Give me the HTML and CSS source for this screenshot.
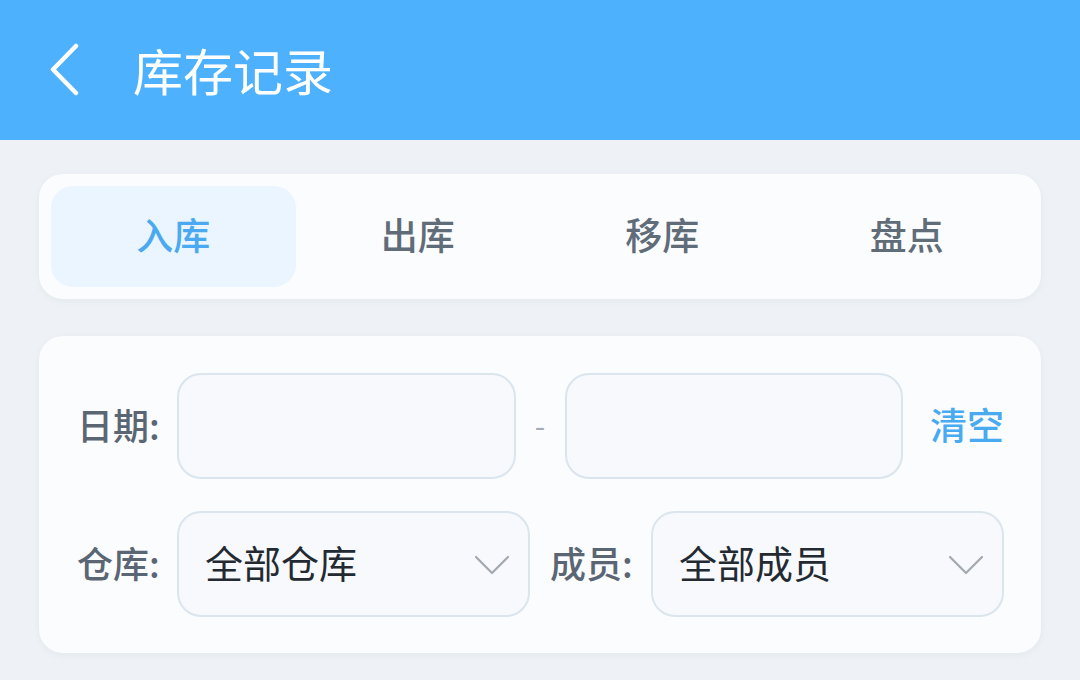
FILE: index.html
```html
<!DOCTYPE html>
<html lang="zh-CN">
<head>
<meta charset="utf-8">
<title>库存记录</title>
<link rel="stylesheet" href="styles.css">
</head>
<body>
<header class="topbar">
  <svg class="back" width="34" height="56" viewBox="0 0 34 56">
    <polyline points="27,3 4,26.5 27,50" fill="none" stroke="#ffffff" stroke-width="4.5" stroke-linecap="round" stroke-linejoin="round"/>
  </svg>
  <h1 class="title">库存记录</h1>
</header>
<main class="content">
  <section class="card tabs">
    <div class="tab active">入库</div>
    <div class="tab">出库</div>
    <div class="tab">移库</div>
    <div class="tab">盘点</div>
  </section>
  <section class="card filters">
    <div class="row">
      <span class="label">日期:</span>
      <div class="field"></div>
      <span class="dash">-</span>
      <div class="field"></div>
      <span class="clear">清空</span>
    </div>
    <div class="row">
      <span class="label">仓库:</span>
      <div class="field select"><span class="value">全部仓库</span>
        <svg class="chev" width="36" height="22" viewBox="0 0 36 22"><polyline points="2,3 18,19 34,3" fill="none" stroke="#a3a9b0" stroke-width="2.2" stroke-linecap="round" stroke-linejoin="round"/></svg>
      </div>
      <span class="label label2">成员:</span>
      <div class="field select"><span class="value">全部成员</span>
        <svg class="chev" width="36" height="22" viewBox="0 0 36 22"><polyline points="2,3 18,19 34,3" fill="none" stroke="#a3a9b0" stroke-width="2.2" stroke-linecap="round" stroke-linejoin="round"/></svg>
      </div>
    </div>
  </section>
</main>
</body>
</html>
```
FILE: styles.css
```css
* { box-sizing: border-box; }
html, body { margin: 0; padding: 0; }
body {
  width: 1080px;
  height: 680px;
  overflow: hidden;
  background: #eef2f6;
  font-family: "Noto Sans CJK SC", "Noto Sans", sans-serif;
}
.topbar {
  height: 140px;
  background: #4db1fd;
  display: flex;
  align-items: center;
  padding-left: 49px;
}
.back { display: block; margin-top: 2px; }
.title {
  margin: 0 0 0 50px;
  font-size: 50px;
  font-weight: 400;
  color: #ffffff;
  line-height: 1;
  padding-bottom: 2px;
}
.content {
  padding: 34px 39px 0 39px;
  display: flex;
  flex-direction: column;
  gap: 37px;
}
.card {
  background: #fbfcfe;
  border-radius: 24px;
  box-shadow: 0 2px 6px rgba(150, 165, 185, 0.12);
}
.tabs {
  height: 125px;
  padding: 12px;
  display: grid;
  grid-template-columns: repeat(4, 1fr);
}
.tab {
  display: flex;
  align-items: center;
  justify-content: center;
  padding-bottom: 5px;
  font-size: 37px;
  font-weight: 500;
  color: #616c79;
  border-radius: 22px;
}
.tab.active {
  background: #eaf5ff;
  color: #4ba9f2;
}
.filters {
  height: 317px;
  padding: 37px 37px 36px 38px;
  display: flex;
  flex-direction: column;
  gap: 32px;
}
.row {
  display: flex;
  align-items: center;
  height: 106px;
}
.label {
  width: 86px;
  flex: none;
  font-size: 36px;
  font-weight: 500;
  color: #5b6675;
  white-space: nowrap;
  padding-bottom: 4px;
}
.label2 { margin-left: 20px; width: 87px; }
.field {
  flex: 1;
  height: 106px;
  margin-left: 14px;
  background: #f7f9fc;
  border: 2px solid #dbe5ee;
  border-radius: 24px;
}
.dash {
  flex: none;
  width: 49px;
  text-align: center;
  font-size: 30px;
  color: #a3abb4;
  padding-bottom: 4px;
}
.dash + .field { margin-left: 0; }
.clear {
  flex: none;
  margin-left: 27px;
  font-size: 37px;
  font-weight: 500;
  color: #48aaf1;
  padding-bottom: 4px;
}
.select {
  display: flex;
  align-items: center;
  justify-content: space-between;
  padding: 0 18px 0 26px;
}
.value {
  font-size: 38px;
  color: #242a32;
  padding-bottom: 5px;
}
.chev { display: block; margin-top: 2px; }
```
